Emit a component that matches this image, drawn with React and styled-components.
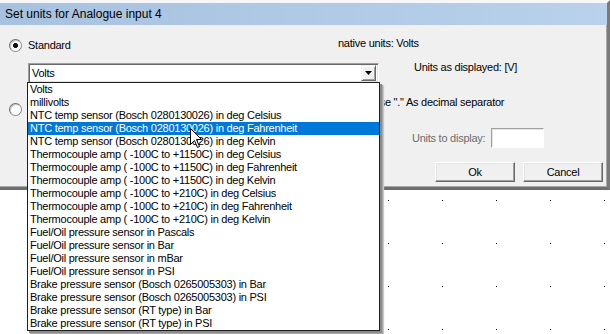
import React from 'react';
import styled, { createGlobalStyle } from 'styled-components';

const Global = createGlobalStyle`
  html, body { margin: 0; padding: 0; background: #fff; }
  body { font-family: "Liberation Sans", Arial, sans-serif; }
  * { box-sizing: border-box; }
`;

const Screen = styled.div`
  position: relative;
  width: 610px;
  height: 334px;
  overflow: hidden;
  display: flex;
  flex-direction: column;
  background: #fff;
`;

const Dialog = styled.div`
  flex: none;
  width: 610px;
  height: 190px;
  background: #f0f0f0;
  border-top: 3px solid #f7f7f7;
  border-right: 3px solid #7a7a7a;
  border-bottom: 3px solid #6e6e6e;
  box-shadow: inset -1px -1px 0 #a8a8a8;
  display: flex;
  flex-direction: column;
`;

const TitleBar = styled.div`
  height: 22px;
  flex: none;
  display: flex;
  align-items: center;
  padding-left: 5px;
  font-size: 12px;
  color: #000;
  background: linear-gradient(90deg, #a7c2df 0%, #b0c9e5 50%, #b9d1ea 100%);
`;

const Body = styled.div`
  flex: 1;
  display: flex;
  flex-direction: column;
  font-size: 11px;
  letter-spacing: -0.25px;
  color: #000;
`;

const Row = styled.div`
  display: flex;
  align-items: ${(p) => p.$align || 'center'};
  height: ${(p) => p.$h}px;
  margin-top: ${(p) => p.$top}px;
  flex: none;
`;

const Radio = styled.span`
  flex: none;
  width: 13px;
  height: 13px;
  margin-left: 9px;
  border-radius: 50%;
  border: 1px solid #8a8a8a;
  border-top-color: #6f6f6f;
  border-left-color: #6f6f6f;
  background: ${(p) =>
    p.$checked
      ? 'radial-gradient(circle, #111 0 2.2px, #fff 2.6px)'
      : '#fff'};
  box-shadow: inset 1px 1px 0 #c8c8c8;
  align-self: ${(p) => p.$self || 'auto'};
`;

const Label = styled.span`
  flex: none;
  line-height: 13px;
  white-space: nowrap;
  color: ${(p) => (p.$disabled ? '#6d6d6d' : '#000')};
  margin-left: ${(p) => p.$ml || 0}px;
  margin-top: ${(p) => p.$mt || 0}px;
  align-self: ${(p) => p.$self || 'auto'};
`;

const RadioGroup = styled.div`
  display: flex;
  align-items: center;
  width: ${(p) => p.$w}px;
  flex: none;
`;

const Combo = styled.div`
  flex: none;
  margin-left: 28px;
  width: 351px;
  height: 20px;
  background: #fff;
  border-top: 1px solid #a0a0a0;
  border-left: 1px solid #a0a0a0;
  border-right: 1px solid #fff;
  border-bottom: 1px solid #fff;
  box-shadow: inset 1px 1px 0 #696969, inset -1px -1px 0 #e3e3e3;
  display: flex;
  align-items: center;
  padding: 2px 2px 2px 3px;
`;

const ComboValue = styled.span`
  flex: 1;
  line-height: 13px;
`;

const ArrowButton = styled.span`
  flex: none;
  width: 15px;
  height: 16px;
  background: #f0f0f0;
  border-top: 1px solid #f0f0f0;
  border-left: 1px solid #f0f0f0;
  border-right: 1px solid #696969;
  border-bottom: 1px solid #696969;
  box-shadow: inset 1px 1px 0 #fff, inset -1px -1px 0 #a0a0a0;
  display: flex;
  align-items: center;
  justify-content: center;
`;

const Check = styled.span`
  flex: none;
  width: 13px;
  height: 13px;
  margin-left: 333px;
  background: #fff;
  border: 1px solid #7a7a7a;
  align-self: flex-start;
  margin-top: 1px;
`;

const TextBox = styled.span`
  flex: none;
  width: 53px;
  height: 20px;
  margin-left: 6px;
  background: #fff;
  border-top: 1px solid #a0a0a0;
  border-left: 1px solid #a0a0a0;
  border-right: 1px solid #fff;
  border-bottom: 1px solid #fff;
  box-shadow: inset 1px 1px 0 #e3e3e3;
`;

const Button = styled.button`
  flex: none;
  width: 80px;
  height: 20px;
  margin-left: ${(p) => p.$ml}px;
  padding: 0;
  font: inherit;
  font-size: 11px;
  letter-spacing: -0.25px;
  color: #000;
  background: #f0f0f0;
  border-top: 1px solid #fff;
  border-left: 1px solid #fff;
  border-right: 1px solid #696969;
  border-bottom: 1px solid #696969;
  box-shadow: inset -1px -1px 0 #a0a0a0, inset 1px 1px 0 #e3e3e3;
`;

const Canvas = styled.div`
  flex: 1;
  display: flex;
`;

const BlankPane = styled.div`
  width: 384px;
  flex: none;
  background: #fff;
`;

const DotGrid = styled.div`
  flex: 1;
  background-color: #fff;
  background-image: radial-gradient(circle at 0.5px 0.5px, #000 0.7px, transparent 0.75px);
  background-size: 54px 43px;
  background-position: 4px 10px;
`;

const DropList = styled.div`
  position: absolute;
  left: 27px;
  top: 82px;
  width: 353px;
  height: 249px;
  background: #fff;
  border: 1px solid #1e1e1e;
  box-shadow: 2px 2px 0 #8c8c8c, 3px 3px 1px #a8a8a8, 4px 4px 1px #d0d0d0;
  font-size: 11px;
  letter-spacing: -0.25px;
  display: flex;
  flex-direction: column;
`;

const Item = styled.div`
  height: 13px;
  line-height: 13px;
  padding-left: 2px;
  white-space: nowrap;
  flex: none;
  background: ${(p) => (p.$selected ? '#0078d7' : 'transparent')};
  color: ${(p) => (p.$selected ? '#fff' : '#000')};
`;

const Cursor = styled.svg`
  position: absolute;
  left: 190px;
  top: 128px;
`;

const items = [
  'Volts',
  'millivolts',
  'NTC temp sensor (Bosch 0280130026) in deg Celsius',
  'NTC temp sensor (Bosch 0280130026) in deg Fahrenheit',
  'NTC temp sensor (Bosch 0280130026) in deg Kelvin',
  'Thermocouple amp ( -100C to +1150C) in deg Celsius',
  'Thermocouple amp ( -100C to +1150C) in deg Fahrenheit',
  'Thermocouple amp ( -100C to +1150C) in deg Kelvin',
  'Thermocouple amp ( -100C to +210C) in deg Celsius',
  'Thermocouple amp ( -100C to +210C) in deg Fahrenheit',
  'Thermocouple amp ( -100C to +210C) in deg Kelvin',
  'Fuel/Oil pressure sensor in Pascals',
  'Fuel/Oil pressure sensor in Bar',
  'Fuel/Oil pressure sensor in mBar',
  'Fuel/Oil pressure sensor in PSI',
  'Brake pressure sensor (Bosch 0265005303) in Bar',
  'Brake pressure sensor (Bosch 0265005303) in PSI',
  'Brake pressure sensor (RT type) in Bar',
  'Brake pressure sensor (RT type) in PSI',
];

export default function App() {
  return (
    <>
      <Global />
      <Screen>
        <Dialog>
          <TitleBar>Set units for Analogue input 4</TitleBar>
          <Body>
            <Row $top={11} $h={18}>
              <RadioGroup $w={338}>
                <Radio $checked />
                <Label $ml={6}>Standard</Label>
              </RadioGroup>
              <Label $mt={-4}>native units: Volts</Label>
            </Row>
            <Row $top={9} $h={20} $align="flex-start">
              <Combo>
                <ComboValue>Volts</ComboValue>
                <ArrowButton>
                  <svg width="7" height="4" viewBox="0 0 7 4">
                    <path d="M0 0H7L3.5 4Z" fill="#000" />
                  </svg>
                </ArrowButton>
              </Combo>
              <Label $ml={35} $mt={-2}>Units as displayed: [V]</Label>
            </Row>
            <Row $top={13} $h={20} $align="flex-start">
              <Radio $self="flex-end" />
              <Check />
              <Label $ml={4}>Use "." As decimal separator</Label>
            </Row>
            <Row $top={12} $h={20}>
              <Label $ml={412} $disabled>Units to display:</Label>
              <TextBox />
            </Row>
            <Row $top={14} $h={20}>
              <Button $ml={435}>Ok</Button>
              <Button $ml={8}>Cancel</Button>
            </Row>
          </Body>
        </Dialog>
        <Canvas>
          <BlankPane />
          <DotGrid />
        </Canvas>
        <DropList>
          {items.map((t, i) => (
            <Item key={i} $selected={i === 3}>
              {t}
            </Item>
          ))}
        </DropList>
        <Cursor width="13" height="21" viewBox="0 0 13 21">
          <path
            d="M0.5 0.5 L0.5 16.5 L4.5 12.5 L7.5 19.5 L9.5 18.5 L6.5 11.5 L11.5 11.5 Z"
            fill="#fff"
            stroke="#000"
            strokeWidth="1"
            strokeLinejoin="miter"
          />
        </Cursor>
      </Screen>
    </>
  );
}
